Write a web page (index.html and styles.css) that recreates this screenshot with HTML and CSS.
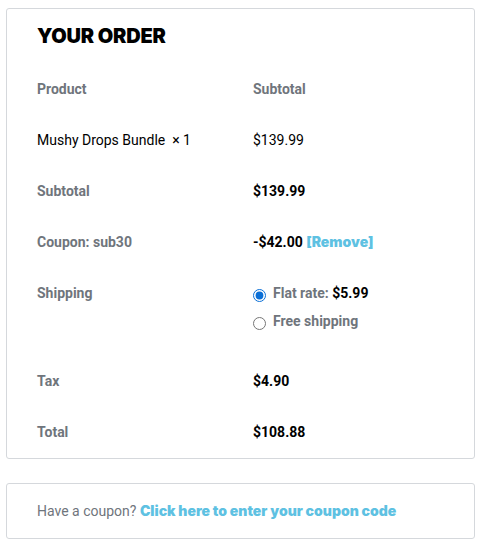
FILE: index.html
```html
<!DOCTYPE html>
<html lang="en">
<head>
<meta charset="utf-8">
<title>Your order</title>
<link rel="stylesheet" href="styles.css">
</head>
<body>
<div class="page">
  <section class="card order">
    <h3 class="order-title">YOUR ORDER</h3>
    <div class="row head">
      <div class="label">Product</div>
      <div class="label">Subtotal</div>
    </div>
    <div class="row">
      <div class="item">Mushy Drops Bundle&nbsp; <span class="qty">× 1</span></div>
      <div class="item">$139.99</div>
    </div>
    <div class="row">
      <div class="label">Subtotal</div>
      <div class="value">$139.99</div>
    </div>
    <div class="row">
      <div class="label">Coupon: sub30</div>
      <div class="value">-$42.00 <a class="link" href="#">[Remove]</a></div>
    </div>
    <div class="row shipping">
      <div class="label">Shipping</div>
      <ul class="methods">
        <li><input type="radio" name="ship" checked><span class="label">Flat rate: <span class="value">$5.99</span></span></li>
        <li><input type="radio" name="ship"><span class="label">Free shipping</span></li>
      </ul>
    </div>
    <div class="row">
      <div class="label">Tax</div>
      <div class="value">$4.90</div>
    </div>
    <div class="row">
      <div class="label">Total</div>
      <div class="value">$108.88</div>
    </div>
  </section>
  <section class="card coupon">
    Have a coupon? <a class="link" href="#">Click here to enter your coupon code</a>
  </section>
</div>
</body>
</html>
```
FILE: styles.css
```css
html, body {
  margin: 0;
  padding: 0;
  background: #fff;
}
body {
  font-family: Roboto, "Liberation Sans", sans-serif;
  font-size: 14px;
  line-height: 20px;
  color: #000;
}
.page {
  width: 469px;
  padding: 8px 0 0 6px;
  display: flex;
  flex-direction: column;
  gap: 24px;
}
.card {
  border: 1px solid #d5d8dc;
  border-radius: 3px;
  padding: 0 30px;
}
.order {
  padding-top: 15px;
  padding-bottom: 0;
}
.order-title {
  margin: 0 0 16px;
  font-family: Inter, "Liberation Sans", sans-serif;
  font-weight: 900;
  font-size: 20px;
  line-height: 24px;
  color: #000;
  letter-spacing: -0.2px;
}
.row {
  display: grid;
  grid-template-columns: 216px 1fr;
  padding: 15px 0 16px;
}
.label {
  color: #6f757c;
  font-weight: 700;
}
.value {
  color: #000;
  font-weight: 700;
}
.item {
  color: #000;
  font-weight: 400;
}
.link {
  font-family: Inter, "Liberation Sans", sans-serif;
  font-weight: 900;
  color: #5ec1e2;
  text-decoration: none;
}
.methods {
  list-style: none;
  margin: 0 0 9px;
  padding: 0;
  display: flex;
  flex-direction: column;
  gap: 8px;
}
.methods li {
  display: flex;
  align-items: center;
}
.methods input {
  width: 13px;
  height: 13px;
  margin: 5px 7px 0 0;
  accent-color: #0b6fd6;
}
.methods .value {
  color: #000;
}
.coupon {
  padding-top: 17px;
  padding-bottom: 17px;
  color: #6f757c;
}
```
